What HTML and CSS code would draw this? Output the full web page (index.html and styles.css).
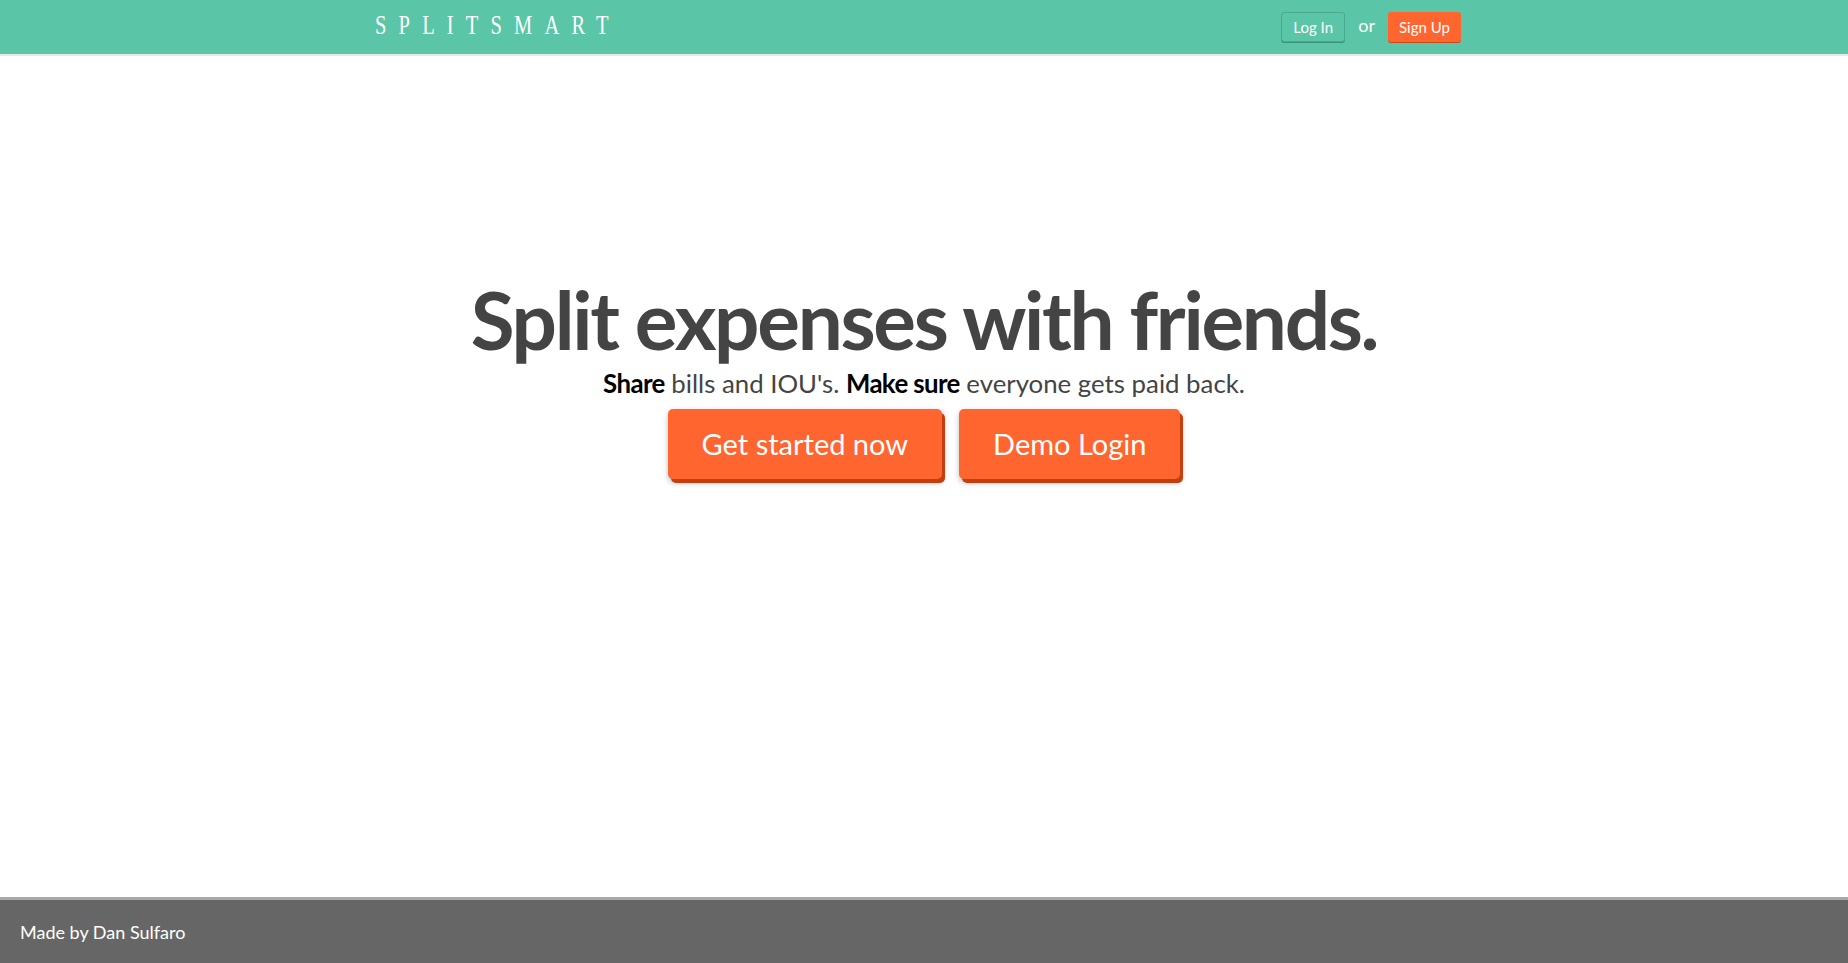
FILE: index.html
```html
<!DOCTYPE html>
<html lang="en">
<head>
<meta charset="utf-8">
<title>SplitSmart</title>
<link rel="stylesheet" href="styles.css">
</head>
<body>
<header class="topbar">
  <div class="topbar-inner">
    <a class="logo" href="#">SPLITSMART</a>
    <nav class="auth">
      <a class="btn-login" href="#">Log In</a>
      <span class="or">or</span>
      <a class="btn-signup" href="#">Sign Up</a>
    </nav>
  </div>
</header>
<main class="hero">
  <h1 class="hero-title">Split expenses with friends.</h1>
  <p class="hero-sub"><strong>Share</strong> bills and IOU's. <strong>Make sure</strong> everyone gets paid back.</p>
  <div class="hero-actions">
    <a class="btn-cta" href="#">Get started now</a>
    <a class="btn-cta" href="#">Demo Login</a>
  </div>
</main>
<footer class="footer">
  <span>Made by Dan Sulfaro</span>
</footer>
</body>
</html>
```
FILE: styles.css
```css
html, body {
  margin: 0;
  padding: 0;
  height: 100%;
}
body {
  display: flex;
  flex-direction: column;
  font-family: Lato, "Open Sans", sans-serif;
  background: #fff;
  overflow: hidden;
}
a { text-decoration: none; }

.topbar {
  background: #5bc5a7;
  height: 54px;
  border-bottom: 2px solid #e8e8e8;
  flex: none;
}
.topbar-inner {
  height: 100%;
  display: flex;
  align-items: center;
  justify-content: space-between;
  padding: 0 387px 0 375px;
}
.logo {
  font-family: "Liberation Serif", serif;
  font-size: 27px;
  color: #fff;
  letter-spacing: 16px;
  display: inline-block;
  transform: scaleX(0.76);
  transform-origin: left center;
  margin-top: -3px;
}
.auth {
  display: flex;
  align-items: center;
  gap: 13px;
  margin-top: -1px;
}
.btn-login, .btn-signup {
  display: flex;
  align-items: center;
  justify-content: center;
  height: 30px;
  box-sizing: border-box;
  border-radius: 3px;
  color: #fff;
  font-size: 15px;
}
.btn-login {
  width: 64px;
  background: #5bc5a7;
  border: 1px solid #48a98e;
  box-shadow: 0 1px 0 #3d9479;
}
.btn-signup {
  width: 73px;
  background: #ff652f;
  box-shadow: 0 1px 0 #c9491c;
}
.or {
  color: #fff;
  font-size: 18px;
  margin-top: -4px;
}

.hero {
  flex: 1;
  display: flex;
  flex-direction: column;
  align-items: center;
  padding-top: 218px;
}
.hero-title {
  margin: 0;
  font-size: 80px;
  line-height: 90px;
  font-weight: 700;
  color: #444;
  letter-spacing: -2.3px;
}
.hero-sub {
  margin: 1px 0 0;
  font-size: 25.8px;
  line-height: 36px;
  color: #444;
}
.hero-sub strong {
  color: #000;
  font-weight: 700;
  letter-spacing: -0.6px;
}
.hero-actions {
  display: flex;
  gap: 17px;
  margin-top: 8px;
}
.btn-cta {
  display: block;
  background: #ff652f;
  color: #fff;
  font-size: 29px;
  line-height: 70px;
  padding: 0 34px;
  border-radius: 5px;
  box-shadow: 3px 4px 0 #c43f0f, 1px 3px 6px rgba(0, 0, 0, 0.35);
}

.footer {
  flex: none;
  height: 63px;
  background: #666;
  border-top: 3px solid #a9a9a9;
  display: flex;
  align-items: center;
  padding-left: 20px;
  color: #fff;
  font-size: 18px;
}
```
